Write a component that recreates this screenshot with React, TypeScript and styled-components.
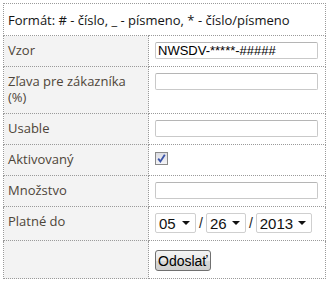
import styled, { createGlobalStyle } from "styled-components";

const GlobalStyle = createGlobalStyle`
  body {
    margin: 0;
    background: #ffffff;
    font-family: "Open Sans", "DejaVu Sans", sans-serif;
  }
`;

const Wrap = styled.div`
  padding: 3px;
`;

const Table = styled.table`
  width: 323px;
  border-collapse: collapse;
  table-layout: fixed;
  font-size: 13px;
`;

const HeadCell = styled.th`
  border: 1px dotted #9a9a9a;
  padding: 8px 4px 7px;
  line-height: 16px;
  text-align: left;
  font-weight: normal;
  color: #141414;
  white-space: nowrap;
`;

const Label = styled.td`
  border: 1px dotted #9a9a9a;
  background: #f3f3f3;
  color: #4e4539;
  padding: 6px 4px 8px;
  line-height: 16px;
  vertical-align: top;
`;

const Value = styled.td<{ $tall?: boolean }>`
  border: 1px dotted #9a9a9a;
  padding: ${(p) => (p.$tall ? "9px 7px 7px 6px" : "6px 7px 7px 6px")};
  vertical-align: top;
  line-height: 16px;
`;

const TextInput = styled.input`
  box-sizing: border-box;
  display: block;
  width: 163px;
  height: 17px;
  padding: 0 2px;
  border: 1px solid #c9c9c9;
  border-top-color: #b5b5b5;
  border-radius: 2px;
  font-family: "Liberation Sans", Arial, sans-serif;
  font-size: 13px;
  color: #000;
  outline: none;
`;

const CheckBox = styled.span`
  box-sizing: border-box;
  display: block;
  width: 13px;
  height: 13px;
  margin-top: 1px;
  border: 1px solid #8a8a8a;
  background: linear-gradient(#dcdde3, #f4f4f7);
  svg {
    display: block;
  }
`;

const DateRow = styled.div`
  display: flex;
  align-items: center;
  gap: 3px;
  color: #1c1c1c;
`;

const SelectBox = styled.span<{ $w: number }>`
  position: relative;
  display: block;
  width: ${(p) => p.$w}px;
  &::after {
    content: "";
    position: absolute;
    right: 6px;
    top: 8px;
    border-left: 4px solid transparent;
    border-right: 4px solid transparent;
    border-top: 4px solid #111;
    pointer-events: none;
  }
`;

const Select = styled.select`
  appearance: none;
  box-sizing: border-box;
  width: 100%;
  height: 20px;
  padding: 0 0 0 3px;
  border: 1px solid #cfcfcf;
  border-radius: 2px;
  background: #fff;
  font-family: "Liberation Sans", Arial, sans-serif;
  font-size: 15px;
  color: #111;
  outline: none;
`;

const Slash = styled.span`
  font-size: 14px;
  font-family: "Liberation Sans", Arial, sans-serif;
`;

const Button = styled.button`
  display: block;
  height: 21px;
  padding: 0 2px;
  border: 1px solid #707070;
  border-radius: 3px;
  background: linear-gradient(#f4f4f4 0%, #e8e8e8 50%, #d8d8d8 51%, #cfcfcf 100%);
  font-family: "Liberation Sans", Arial, sans-serif;
  font-size: 14px;
  color: #000;
`;

const App = () => {
  return (
    <>
      <GlobalStyle />
      <Wrap>
        <Table>
          <colgroup>
            <col style={{ width: 145 }} />
            <col />
          </colgroup>
          <tbody>
            <tr>
              <HeadCell colSpan={2}>
                Formát: # - číslo, _ - písmeno, * - číslo/písmeno
              </HeadCell>
            </tr>
            <tr>
              <Label>Vzor</Label>
              <Value>
                <TextInput defaultValue="NWSDV-*****-#####" />
              </Value>
            </tr>
            <tr>
              <Label>Zľava pre zákazníka (%)</Label>
              <Value>
                <TextInput />
              </Value>
            </tr>
            <tr>
              <Label>Usable</Label>
              <Value>
                <TextInput />
              </Value>
            </tr>
            <tr>
              <Label>Aktivovaný</Label>
              <Value>
                <CheckBox>
                  <svg width="11" height="11" viewBox="0 0 11 11">
                    <path
                      d="M2.2 5.6 L4.4 8.4 L8.8 1.8"
                      fill="none"
                      stroke="#3b54a8"
                      strokeWidth="1.8"
                    />
                  </svg>
                </CheckBox>
              </Value>
            </tr>
            <tr>
              <Label>Množstvo</Label>
              <Value>
                <TextInput />
              </Value>
            </tr>
            <tr>
              <Label>Platné do</Label>
              <Value>
                <DateRow>
                  <SelectBox $w={41}>
                    <Select defaultValue="05">
                      <option>05</option>
                    </Select>
                  </SelectBox>
                  <Slash>/</Slash>
                  <SelectBox $w={40}>
                    <Select defaultValue="26">
                      <option>26</option>
                    </Select>
                  </SelectBox>
                  <Slash>/</Slash>
                  <SelectBox $w={56}>
                    <Select defaultValue="2013">
                      <option>2013</option>
                    </Select>
                  </SelectBox>
                </DateRow>
              </Value>
            </tr>
            <tr>
              <Label />
              <Value $tall>
                <Button>Odoslať</Button>
              </Value>
            </tr>
          </tbody>
        </Table>
      </Wrap>
    </>
  );
};

export default App;
